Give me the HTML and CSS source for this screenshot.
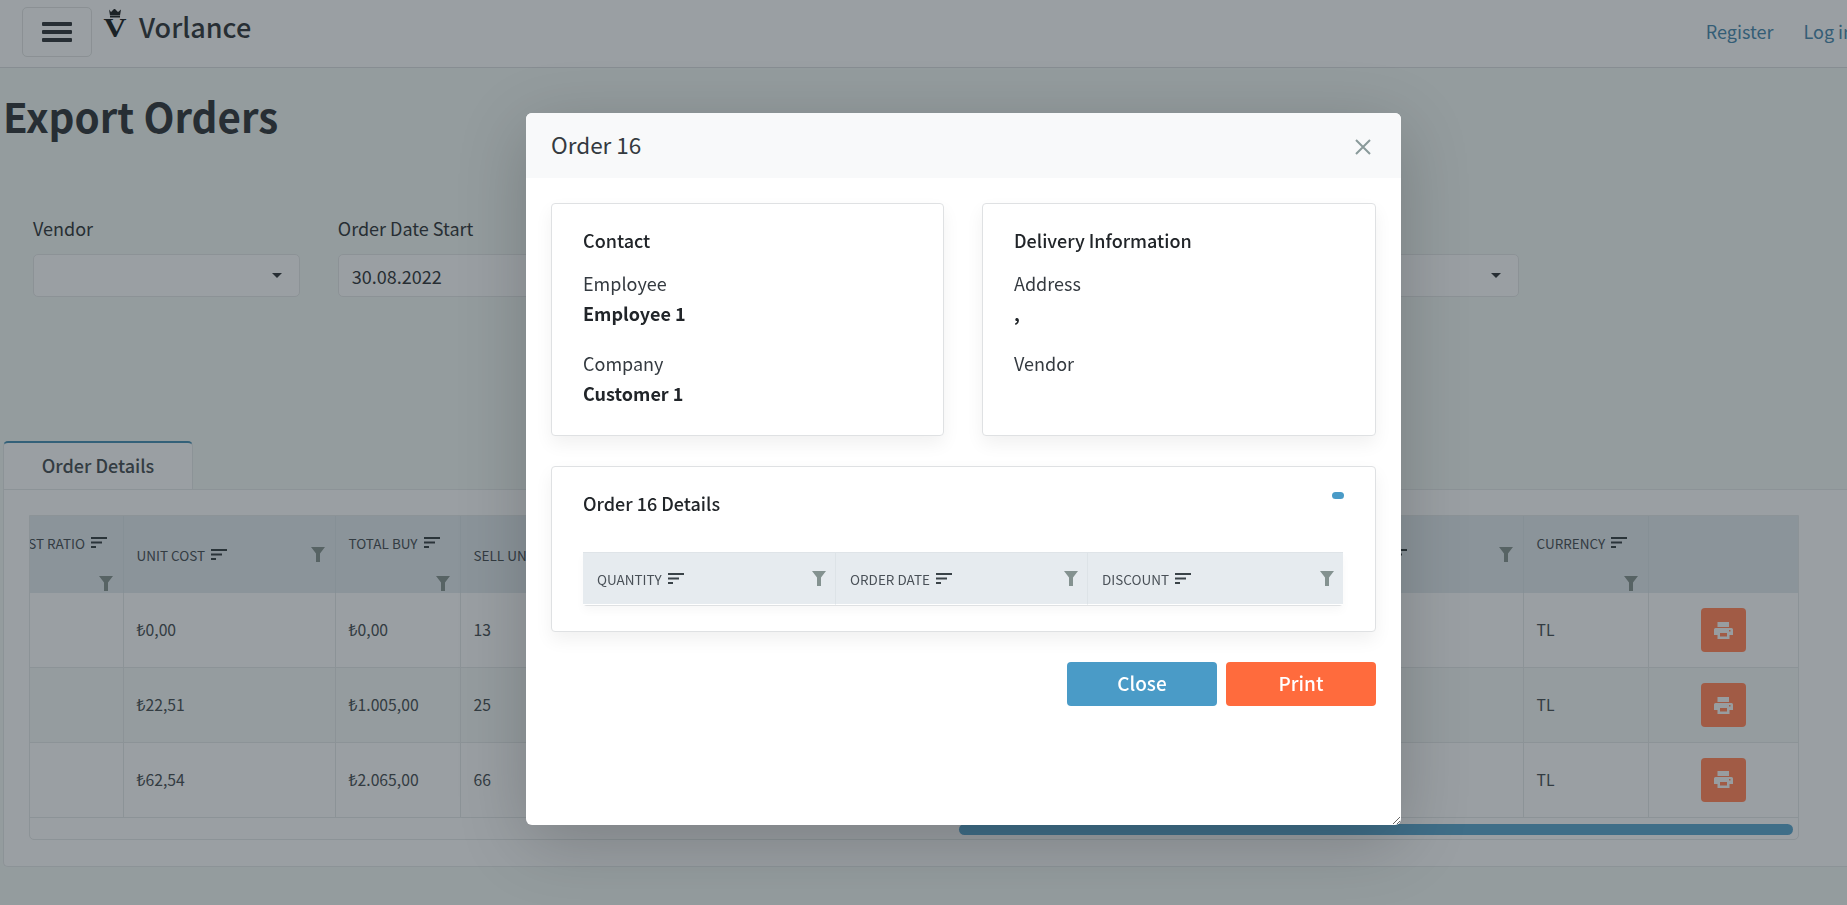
FILE: index.html
```
<!DOCTYPE html>
<html lang="en">
<head>
<meta charset="utf-8">
<title>Export Orders</title>
<link rel="stylesheet" href="styles.css">
</head>
<body>
<svg class="defs" aria-hidden="true">
  <symbol id="i-filter" viewBox="0 0 14 15"><path d="M0 0H14L9 6.5V15H5V6.5Z"/></symbol>
  <symbol id="i-sort" viewBox="0 0 16 12"><path d="M0 0H16V2H0ZM0 4.500H11V6.500H0ZM0 9H5V11H0Z"/></symbol>
  <symbol id="i-print" viewBox="0 0 19 17"><path d="M3.500 0H15V5H3.500ZM1.500 6H17.500A1.500 1.500 0 0 1 19 7.500V13H15.500V17H3.500V13H0V7.500A1.500 1.500 0 0 1 1.500 6ZM6 11V14.500H13V11ZM15 8V9.500H16.500V8Z" fill-rule="evenodd"/></symbol>
</svg>

<header class="navbar">
  <button class="toggler" type="button" aria-label="Menu"><span></span><span></span><span></span></button>
  <a class="brand">
    <svg class="logo" viewBox="0 0 24 30" width="24" height="30">
      <path class="crown" d="M6 0.500 8 3 11 0 12 0 15 3 18 0.500 17 6.500H7Z"/>
      <rect class="crown" x="7" y="7" width="10" height="1.500"/>
      <text class="logo-v" x="0.500" y="28" textLength="23" lengthAdjust="spacingAndGlyphs">V</text>
    </svg>
    <span class="brand-name">Vorlance</span>
  </a>
  <nav class="nav-links"><a>Register</a><a>Log in</a></nav>
</header>

<main class="content">
  <h1 class="page-title">Export Orders</h1>
  <section class="filters">
    <div class="field"><label>Vendor</label><div class="control"><span></span><i class="caret"></i></div></div>
    <div class="field"><label>Order Date Start</label><div class="control"><span>30.08.2022</span></div></div>
    <div class="field"><label>Order Date End</label><div class="control"><span>30.09.2022</span></div></div>
    <div class="field"><label>Customer</label><div class="control"><span></span><i class="caret"></i></div></div>
    <div class="field"><label>Status</label><div class="control"><span></span><i class="caret"></i></div></div>
  </section>

  <div class="tab">Order Details</div>
  <section class="tab-panel">
    <div class="grid-wrap">
      <table class="grid">
        <colgroup>
          <col class="c1"><col class="c2"><col class="c3"><col class="c4"><col class="c4"><col class="c5"><col class="c3"><col class="c6">
        </colgroup>
        <thead>
          <tr>
            <th><div class="th th-wrap th-scrolled"><span class="lbl">COST RATIO</span><svg class="sort"><use href="#i-sort"/></svg><svg class="filter"><use href="#i-filter"/></svg></div></th>
            <th><div class="th"><span class="lbl">UNIT COST</span><svg class="sort"><use href="#i-sort"/></svg><svg class="filter"><use href="#i-filter"/></svg></div></th>
            <th><div class="th th-wrap"><span class="lbl">TOTAL BUY</span><svg class="sort"><use href="#i-sort"/></svg><svg class="filter"><use href="#i-filter"/></svg></div></th>
            <th><div class="th"><span class="lbl">SELL UNIT PRICE</span><svg class="sort"><use href="#i-sort"/></svg><svg class="filter"><use href="#i-filter"/></svg></div></th>
            <th><div class="th"><span class="lbl">TOTAL SELL</span><svg class="sort"><use href="#i-sort"/></svg><svg class="filter"><use href="#i-filter"/></svg></div></th>
            <th><div class="th"><span class="lbl">SELL RATIO</span><svg class="sort"><use href="#i-sort"/></svg><svg class="filter"><use href="#i-filter"/></svg></div></th>
            <th><div class="th th-wrap"><span class="lbl">CURRENCY</span><svg class="sort"><use href="#i-sort"/></svg><svg class="filter"><use href="#i-filter"/></svg></div></th>
            <th></th>
          </tr>
        </thead>
        <tbody>
          <tr>
            <td></td><td>₺0,00</td><td>₺0,00</td><td>13</td><td></td><td></td><td>TL</td>
            <td class="act"><button class="print-btn" type="button" aria-label="Print"><svg class="print"><use href="#i-print"/></svg></button></td>
          </tr>
          <tr>
            <td></td><td>₺22,51</td><td>₺1.005,00</td><td>25</td><td></td><td></td><td>TL</td>
            <td class="act"><button class="print-btn" type="button" aria-label="Print"><svg class="print"><use href="#i-print"/></svg></button></td>
          </tr>
          <tr>
            <td></td><td>₺62,54</td><td>₺2.065,00</td><td>66</td><td></td><td></td><td>TL</td>
            <td class="act"><button class="print-btn" type="button" aria-label="Print"><svg class="print"><use href="#i-print"/></svg></button></td>
          </tr>
        </tbody>
      </table>
      <div class="scroll-track"><div class="scroll-thumb"></div></div>
    </div>
  </section>
</main>

<div class="backdrop"></div>

<div class="modal" role="dialog">
  <div class="modal-head">
    <span class="modal-title">Order 16</span>
    <svg class="close" viewBox="0 0 16 16" width="16" height="16"><path d="M1 1 15 15M15 1 1 15"/></svg>
  </div>
  <div class="modal-body">
    <div class="cards">
      <div class="card">
        <div class="card-title">Contact</div>
        <div class="kv first">Employee</div>
        <div class="kv val">Employee 1</div>
        <div class="kv next">Company</div>
        <div class="kv val">Customer 1</div>
      </div>
      <div class="card">
        <div class="card-title">Delivery Information</div>
        <div class="kv first">Address</div>
        <div class="kv val">,</div>
        <div class="kv next">Vendor</div>
        <div class="kv val"></div>
      </div>
    </div>
    <div class="card detail">
      <div class="detail-head">
        <div class="card-title">Order 16 Details</div>
        <span class="pill"></span>
      </div>
      <table class="mini">
        <colgroup><col class="m1"><col class="m2"><col class="m3"></colgroup>
        <thead>
          <tr>
            <th><div class="th"><span class="lbl">QUANTITY</span><svg class="sort"><use href="#i-sort"/></svg><svg class="filter"><use href="#i-filter"/></svg></div></th>
            <th><div class="th"><span class="lbl">ORDER DATE</span><svg class="sort"><use href="#i-sort"/></svg><svg class="filter"><use href="#i-filter"/></svg></div></th>
            <th><div class="th"><span class="lbl">DISCOUNT</span><svg class="sort"><use href="#i-sort"/></svg><svg class="filter"><use href="#i-filter"/></svg></div></th>
          </tr>
        </thead>
      </table>
    </div>
    <div class="actions">
      <button class="btn btn-close" type="button">Close</button>
      <button class="btn btn-print" type="button">Print</button>
    </div>
  </div>
</div>
</body>
</html>
```

FILE: styles.css
```
* { box-sizing: border-box; }
html, body { margin: 0; height: 905px; overflow: hidden; }
body {
  font-family: "Noto Sans CJK SC", "Noto Sans", "DejaVu Sans", sans-serif;
  font-size: 18px;
  line-height: 24px;
  color: #343a40;
  background: #e9f0f0;
  position: relative;
}
.defs { position: absolute; width: 0; height: 0; }

/* navbar */
.navbar {
  height: 68px;
  display: flex;
  align-items: flex-start;
  padding: 7px 0 0 22px;
  background: #f3f5f8;
  border-bottom: 1px solid #d4d8dc;
  white-space: nowrap;
}
.toggler {
  width: 70px;
  height: 50px;
  padding: 0;
  background: transparent;
  border: 1px solid #dadde0;
  border-radius: 5px;
  display: flex;
  flex-direction: column;
  align-items: center;
  justify-content: center;
  gap: 4.5px;
}
.toggler span { display: block; width: 30px; height: 3.5px; background: #343a40; border-radius: 1px; }
.brand { display: flex; align-items: flex-start; margin-left: 11px; }
.logo { margin-top: 2px; display: block; }
.crown { fill: #212529; }
.logo-v { font-family: "Liberation Serif", serif; font-weight: 700; font-size: 28px; fill: #212529; }
.brand-name { margin-left: 12px; margin-top: 2px; font-size: 27px; font-weight: 500; line-height: 36px; color: #343a40; }
.nav-links { display: flex; gap: 30px; margin-left: auto; margin-top: 12px; margin-right: -7px; color: #4a88ad; font-size: 18px; }
.nav-links a { color: inherit; }

/* page */
.page-title {
  margin: 18px 0 0 3px;
  font-size: 40.3px;
  line-height: 60px;
  font-weight: 700;
  color: #343a40;
}
.filters {
  margin-top: 70px;
  display: grid;
  grid-template-columns: repeat(5, 1fr);
  gap: 38px;
  padding: 0 328px 0 33px;
}
.field label { display: block; line-height: 24px; font-size: 18px; color: #343a40; }
.control {
  margin-top: 14px;
  height: 43px;
  background: #f4f6f8;
  border: 1px solid #dde0e3;
  border-radius: 5px;
  display: flex;
  align-items: center;
  justify-content: space-between;
  padding: 0 13px;
  font-size: 18px;
}
.caret { width: 0; height: 0; border-left: 5px solid transparent; border-right: 5px solid transparent; border-top: 5px solid #343a40; margin-right: 4px; }

.tab {
  margin: 144px 0 0 3px;
  width: 190px;
  height: 48px;
  padding-bottom: 2px;
  background: #f3f5f8;
  border: 1px solid #dde1e4;
  border-top: 2px solid #4a8eb3;
  border-bottom: 0;
  border-radius: 5px 5px 0 0;
  display: flex;
  align-items: center;
  justify-content: center;
  font-size: 18px;
  font-weight: 500;
  color: #495057;
}
.tab-panel {
  margin-left: 3px;
  height: 378px;
  background: #f3f5f8;
  border: 1px solid #dde1e4;
  border-right: 0;
  border-radius: 0 0 0 5px;
  padding: 25px 48px 0 25px;
}
.grid-wrap {
  height: 325px;
  border: 1px solid #dde1e4;
  border-radius: 0 0 5px 5px;
  overflow: hidden;
}
.grid { border-collapse: collapse; table-layout: fixed; width: 1798px; margin-left: -30px; }
.c1 { width: 123px; }
.c2 { width: 212px; }
.c3 { width: 125px; }
.c4 { width: 420px; }
.c5 { width: 223px; }
.c6 { width: 150px; }
.grid th { background: #dbe3ea; height: 77px; padding: 0; font-weight: 400; border-right: 1px solid #d3dce3; }
.th {
  display: flex;
  flex-wrap: wrap;
  align-items: center;
  padding: 0 10px 0 14px;
  font-size: 13.5px;
  line-height: 20px;
  color: #495057;
  text-align: left;
  row-gap: 23px;
}
.grid .th { padding-left: 12.5px; }
.grid .th-wrap { padding-top: 14px; }
.grid .th-scrolled { padding-left: 9.5px; }
.lbl { white-space: nowrap; }
.sort { width: 16px; height: 12px; margin-left: 6px; fill: #3a4348; }
.filter { width: 14px; height: 15px; margin-left: auto; fill: #849290; }
.grid td {
  height: 74.7px;
  padding: 0 12.5px;
  font-size: 15.75px;
  color: #495057;
  border: 1px solid #dde1e4;
  border-top: 0;
}
.grid tbody tr:nth-child(even) td { background: #ecf0f2; }
.grid td.act { padding: 0; text-align: center; }
.print-btn {
  width: 45px;
  height: 44px;
  padding: 0;
  background: #ff845c;
  border: 0;
  border-radius: 4px;
  display: inline-flex;
  align-items: center;
  justify-content: center;
  vertical-align: middle;
}
.print { width: 19px; height: 17px; fill: #f0f2f4; }
.scroll-track { padding: 6px 5px 0 929px; }
.scroll-thumb { height: 11px; border-radius: 6px; background: #5ca3cc; }

/* overlay */
.backdrop { position: fixed; inset: 0; background: rgba(20, 30, 35, 0.4); }
.modal {
  position: absolute;
  left: 526px;
  top: 113px;
  width: 875px;
  height: 712px;
  background: #fff;
  border-radius: 6px;
  box-shadow: 0 16px 70px rgba(0, 0, 0, 0.2);
  resize: both;
  overflow: hidden;
  color: #212529;
}
.modal-head {
  height: 65px;
  background: #f8f9fa;
  display: flex;
  align-items: center;
  justify-content: space-between;
  padding: 0 30px 0 25px;
}
.modal-title { font-size: 22.5px; line-height: 32px; color: #343a40; margin-top: -3px; }
.close { fill: none; stroke: #8a9a9a; stroke-width: 2; margin-top: 2px; }
.modal-body { padding: 25px; }
.cards { display: grid; grid-template-columns: 393px 394px; gap: 38px; }
.card {
  height: 233px;
  border: 1px solid #dfe1e3;
  border-radius: 4px;
  background: #fff;
  padding: 24px 31px 0;
  box-shadow: 0 8px 18px rgba(0, 0, 0, 0.06);
}
.card-title { font-weight: 500; line-height: 24px; color: #212529; }
.kv { line-height: 24px; color: #343a40; height: 24px; }
.kv.first { margin-top: 19px; }
.kv.next { margin-top: 26px; }
.kv.val { margin-top: 6px; font-weight: 700; color: #212529; }
.detail { height: 166px; margin-top: 30px; }
.detail-head { display: flex; justify-content: space-between; align-items: flex-start; height: 61px; }
.pill { width: 12px; height: 7px; margin-top: 1px; border-radius: 4px; background: #4a9bc7; }
.mini {
  width: 760px;
  table-layout: fixed;
  border-collapse: separate;
  border-spacing: 0;
  border-bottom: 1px solid #dfe1e3;
  border-radius: 0 0 4px 4px;
  box-shadow: 0 5px 10px rgba(0, 0, 0, 0.03);
}
.m1 { width: 253px; }
.m2 { width: 252px; }
.m3 { width: 255px; }
.mini th { background: #e6ebef; background-clip: padding-box; height: 53px; padding: 0; font-weight: 400; border-top: 1px solid #dfe4e8; border-right: 1px solid #dde3e7; border-bottom: 1px solid #fff; }
.mini th:last-child { border-right: 0; }
.mini .th { padding-right: 9px; }
.actions { display: flex; justify-content: flex-end; gap: 9px; margin-top: 30px; }
.btn {
  width: 150px;
  height: 44px;
  padding: 0 0 4px;
  border: 0;
  border-radius: 4px;
  color: #fff;
  font-family: inherit;
  font-size: 19px;
  font-weight: 500;
}
.btn-close { background: #4a9bc7; }
.btn-print { background: #ff6b3d; }
```
